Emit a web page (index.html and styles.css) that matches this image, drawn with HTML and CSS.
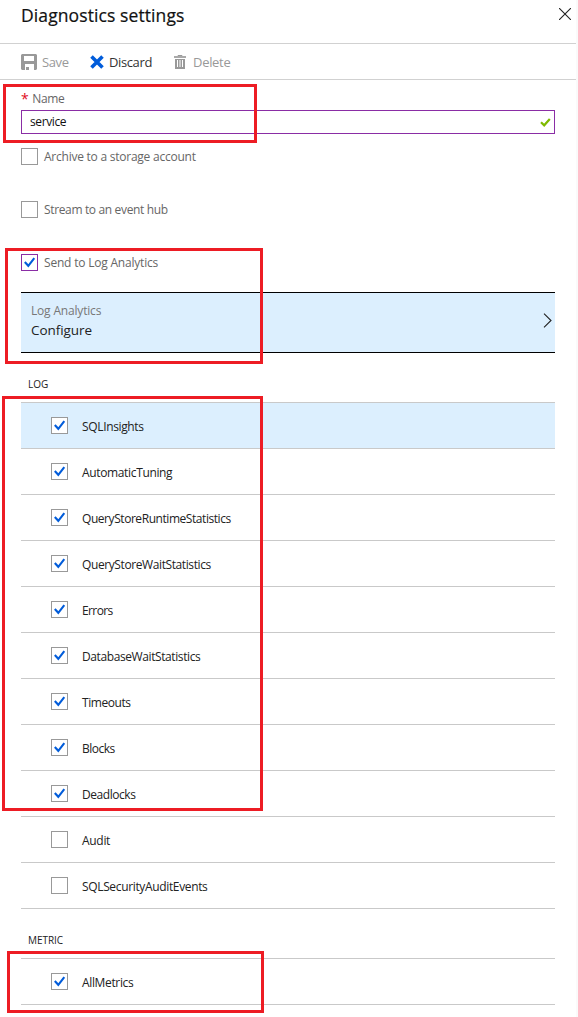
FILE: index.html
```html
<!DOCTYPE html>
<html lang="en">
<head>
<meta charset="utf-8">
<title>Diagnostics settings</title>
<link rel="stylesheet" href="styles.css">
</head>
<body>
<svg class="symbols" aria-hidden="true">
  <symbol id="check" viewBox="0 0 17 17"><path d="M3.8 8 7.3 11.8 13.3 4.2" fill="none" stroke="#015cda" stroke-width="2.1"/></symbol>
</svg>
<main class="blade">
  <header class="header">
    <h1 class="title">Diagnostics settings</h1>
    <svg class="close" viewBox="0 0 12 12"><path d="M0 0 12 12M12 0 0 12" stroke="#222" stroke-width="1.1"/></svg>
  </header>
  <nav class="toolbar">
    <span class="command disabled save"><svg width="16" height="16" viewBox="0 0 16 16"><path fill="#999" fill-rule="evenodd" d="M1 0H15L16 1V15L15 16H13V10H4V16H1L0 15V1ZM3 2V7H13V2Z"/><path fill="#999" d="M5 13H8V16H5Z"/></svg><span>Save</span></span>
    <span class="command discard"><svg width="14" height="14" viewBox="0 0 14 14"><path d="M1.5 1.5 12.5 12.5M12.5 1.5 1.5 12.5" stroke="#015cda" stroke-width="3.6"/></svg><span>Discard</span></span>
    <span class="command disabled delete"><svg width="12" height="14" viewBox="0 0 12 14"><path fill="none" stroke="#999" d="M4 1.5V.5H8V1.5"/><path fill="#aaa" d="M0 1H12V3H0Z"/><path fill="#999" fill-rule="evenodd" d="M1 4H11V14H1ZM3 5V12H4V5ZM5.5 5V12H6.5V5ZM8 5V12H9V5Z"/></svg><span>Delete</span></span>
  </nav>
  <div class="content">
    <label class="field-label"><span class="required">*</span><span>Name</span></label>
    <div class="input"><span>service</span><svg width="11" height="9" viewBox="0 0 11 9"><path d="M1 4.2 4.2 7.3 9.8 1" fill="none" stroke="#7fba00" stroke-width="2.2"/></svg></div>
    <div class="options">
      <div class="option"><span class="box"></span><span class="t-archive">Archive to a storage account</span></div>
      <div class="option"><span class="box"></span><span class="t-stream">Stream to an event hub</span></div>
      <div class="option"><span class="box active"><svg><use href="#check"/></svg></span><span class="t-send">Send to Log Analytics</span></div>
    </div>
    <div class="selector">
      <div><div class="selector-label">Log Analytics</div><div class="selector-value">Configure</div></div>
      <svg width="9" height="15" viewBox="0 0 9 15"><path d="M1 .7 8 7.5 1 14.3" fill="none" stroke="#222" stroke-width="1.1"/></svg>
    </div>
    <h2 class="section log">LOG</h2>
    <div class="rows">
      <div class="row selected"><span class="box"><svg><use href="#check"/></svg></span><span class="r1">SQLInsights</span></div>
      <div class="row"><span class="box"><svg><use href="#check"/></svg></span><span class="r2">AutomaticTuning</span></div>
      <div class="row"><span class="box"><svg><use href="#check"/></svg></span><span class="r3">QueryStoreRuntimeStatistics</span></div>
      <div class="row"><span class="box"><svg><use href="#check"/></svg></span><span class="r4">QueryStoreWaitStatistics</span></div>
      <div class="row"><span class="box"><svg><use href="#check"/></svg></span><span class="r5">Errors</span></div>
      <div class="row"><span class="box"><svg><use href="#check"/></svg></span><span class="r6">DatabaseWaitStatistics</span></div>
      <div class="row"><span class="box"><svg><use href="#check"/></svg></span><span class="r7">Timeouts</span></div>
      <div class="row"><span class="box"><svg><use href="#check"/></svg></span><span class="r8">Blocks</span></div>
      <div class="row"><span class="box"><svg><use href="#check"/></svg></span><span class="r9">Deadlocks</span></div>
      <div class="row"><span class="box"></span><span class="r10">Audit</span></div>
      <div class="row"><span class="box"></span><span class="r11">SQLSecurityAuditEvents</span></div>
    </div>
    <h2 class="section metric">METRIC</h2>
    <div class="rows">
      <div class="row"><span class="box"><svg><use href="#check"/></svg></span><span class="r12">AllMetrics</span></div>
    </div>
  </div>
  <div class="mark mark-name"></div>
  <div class="mark mark-analytics"></div>
  <div class="mark mark-log"></div>
  <div class="mark mark-metric"></div>
</main>
</body>
</html>
```
FILE: styles.css
```css
* { box-sizing: border-box; }
body { margin: 0; background: #fff; font: 12px/16px "Open Sans", "Noto Sans", sans-serif; color: #222; }
svg { display: block; flex: none; }
.symbols { position: absolute; width: 0; height: 0; }
.blade { position: relative; width: 578px; height: 1017px; overflow: hidden; border-right: 2px solid #fafafa; }
.header { height: 44px; border-bottom: 1px solid #d1d1d1; display: flex; justify-content: space-between; padding: 3px 3px 0 21px; }
.title { margin: 0; font-size: 17.5px; line-height: 24px; font-weight: 500; color: #111; letter-spacing: .1px; -webkit-text-stroke: .2px #111; }
.close { width: 12px; height: 12px; margin: 5px 2px 0 0; }
.toolbar { height: 36px; border-bottom: 1px solid #d1d1d1; display: flex; align-items: center; padding-left: 21px; font-size: 13px; letter-spacing: -.38px; }
.command { display: flex; align-items: center; color: #333; }
.disabled { color: #999; }
.save { gap: 5px; width: 69px; }
.discard { gap: 5px; width: 84px; }
.delete { gap: 7px; letter-spacing: -.3px; }
.content { padding: 11px 21px 0; }
.field-label { display: flex; gap: 4px; height: 19px; color: #666; letter-spacing: -.4px; }
.required { color: #e00b1c; font-size: 14px; }
.input { height: 24px; border: 1px solid #8a2da5; display: flex; justify-content: space-between; align-items: center; padding: 0 3px 0 8px; color: #111; letter-spacing: -.4px; }
.options { padding-top: 14px; display: grid; gap: 36px; }
.option { display: flex; align-items: center; gap: 6px; height: 17px; color: #666; }
.t-archive { letter-spacing: -.24px; }
.t-stream { letter-spacing: -.35px; }
.t-send { letter-spacing: -.2px; }
.box { width: 17px; height: 17px; flex: none; border: 1px solid #999; background: #fff; }
.box svg { width: 17px; height: 17px; margin: -1px; }
.box.active { border-color: #8a2da5; }
.selector { margin-top: 21px; height: 61px; border: solid #000; border-width: 1px 0; background: #dceffe; padding: 9px 3px 0 10px; display: flex; justify-content: space-between; }
.selector-label { color: #777; line-height: 18px; letter-spacing: -.18px; }
.selector-value { font-size: 13.5px; line-height: 20px; color: #222; letter-spacing: -.06px; }
.selector > svg { margin-top: 11px; }
.section { margin: 0; font-size: 10px; line-height: 16px; font-weight: 400; padding: 23px 0 0 7px; height: 49px; letter-spacing: -.05px; }
.rows { border-top: 1px solid #c9c9c9; }
.row { height: 46px; border-bottom: 1px solid #c9c9c9; padding-left: 30px; display: flex; align-items: center; gap: 14px; letter-spacing: -.4px; }
.row > span:last-child { padding-top: 2px; }
.r1, .r2, .r11, .r12 { letter-spacing: -.35px; }
.r3, .r7, .r9 { letter-spacing: -.44px; }
.r5 { letter-spacing: -.6px; }
.r8 { letter-spacing: -.5px; }
.r10 { letter-spacing: -.3px; }
.selected { background: #dceffe; }
.mark { position: absolute; border: 3px solid #ed1c24; }
.mark-name { left: 3px; top: 84px; width: 254px; height: 59px; }
.mark-analytics { left: 5px; top: 248px; width: 258px; height: 116px; }
.mark-log { left: 2px; top: 396px; width: 261px; height: 415px; }
.mark-metric { left: 7px; top: 951px; width: 257px; height: 62px; }
```
